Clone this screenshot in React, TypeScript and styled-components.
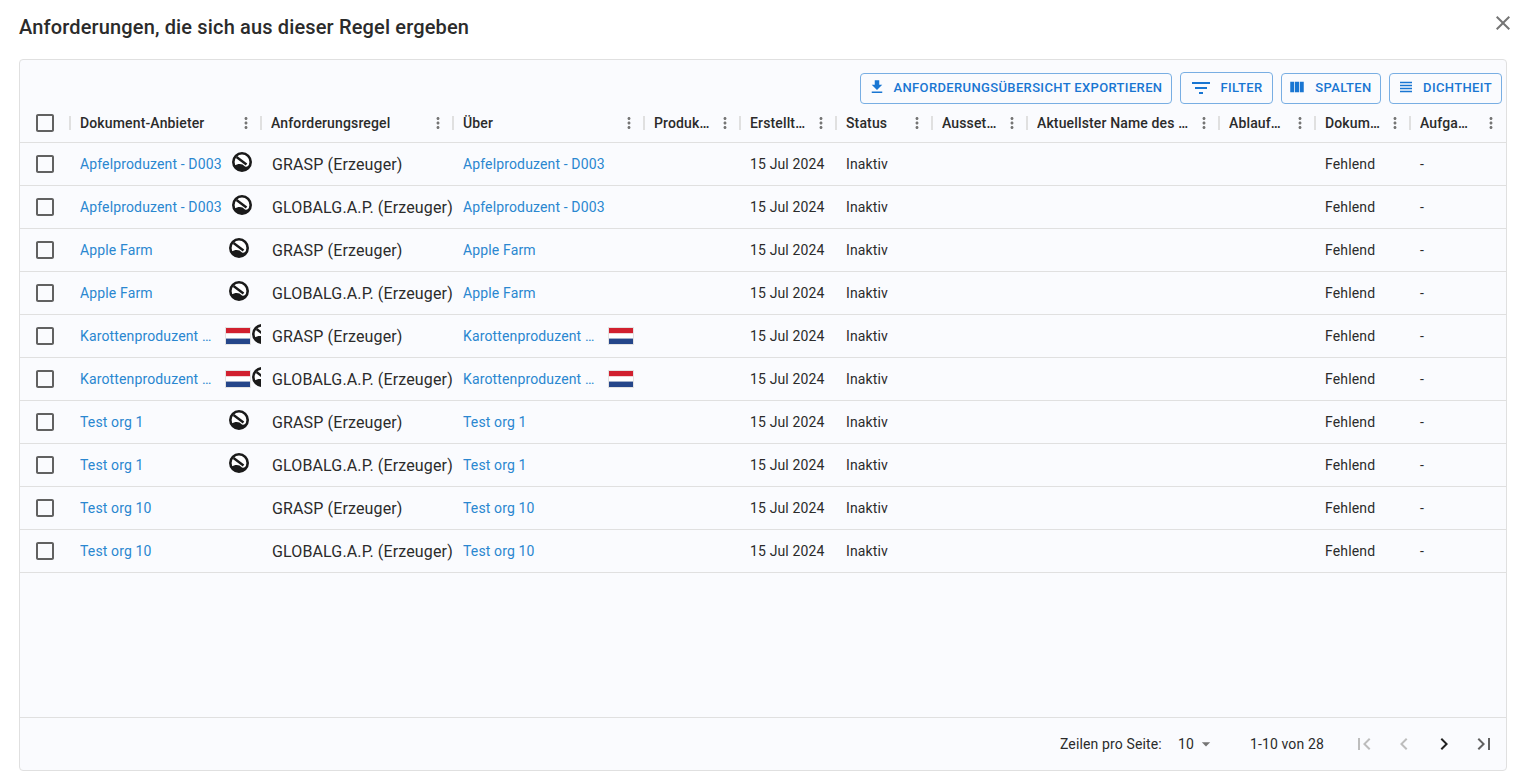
import React from "react";
import styled, { createGlobalStyle } from "styled-components";

const GRID = "50px 191px 192px 191px 96px 96px 96px 95px 192px 96px 95px 96px";

const Global = createGlobalStyle`
  html, body { margin: 0; padding: 0; background: #fff; }
  body { font-family: Roboto, "Liberation Sans", sans-serif; color: #2b2b2b; overflow: hidden; }
`;
const Page = styled.div`
  width: 1524px; height: 780px; box-sizing: border-box;
  padding: 0 17px 9px 19px; display: flex; flex-direction: column;
`;
const TitleBar = styled.header`
  height: 59px; flex: none; display: flex; align-items: flex-start; justify-content: space-between;
`;
const Title = styled.h2`
  margin: 15px 0 0; font-size: 20px; line-height: 24px; font-weight: 500; letter-spacing: 0.15px; color: #2b2b2b;
`;
const CloseBtn = styled.button`
  border: 0; background: none; padding: 0; margin: 11px -8px 0 0; width: 24px; height: 24px; color: #757575;
  display: flex; align-items: center; justify-content: center;
`;
const Panel = styled.section`
  flex: 1; min-height: 0; display: flex; flex-direction: column; background: #fafbfe;
  border: 1px solid #e0e0e0; border-radius: 4px; overflow: hidden;
`;
const Toolbar = styled.div`
  height: 44px; flex: none; box-sizing: border-box; padding: 12px 4px 0 0;
  display: flex; justify-content: flex-end; align-items: flex-start; gap: 8px;
`;
const ToolButton = styled.button<{ $w: number; $gap: number; $tall?: boolean }>`
  width: ${(p) => p.$w}px; height: ${(p) => (p.$tall ? 32 : 31)}px; margin-top: ${(p) => (p.$tall ? 0 : 1)}px;
  box-sizing: border-box; display: flex; align-items: center; justify-content: center; gap: ${(p) => p.$gap}px;
  background: transparent; border: 1px solid #78aee3; border-radius: 4px; color: #1976d2;
  padding: 0 2px ${(p) => (p.$tall ? 1 : 3)}px 0;
  font-family: inherit; font-size: 13px; font-weight: 500; letter-spacing: 0.36px; text-transform: uppercase; white-space: nowrap;
`;
const Row = styled.div<{ $head?: boolean }>`
  display: grid; grid-template-columns: ${GRID}; flex: none; box-sizing: border-box;
  height: ${(p) => (p.$head ? 39 : 43)}px; border-bottom: 1px solid #e0e0e0; align-items: stretch;
`;
const CheckCell = styled.div`
  display: flex; align-items: center; padding-left: 13px; color: #616161;
`;
const HeadCell = styled.div`
  display: flex; align-items: center; min-width: 0; padding-right: 6px;
`;
const Sep = styled.span`
  flex: none; width: 2px; height: 14px; background: #e0e0e0; margin-left: -1px; margin-right: 9px;
`;
const HeadLabel = styled.span<{ $gap: number }>`
  flex: 1; min-width: 0; overflow: hidden; white-space: nowrap; text-overflow: ellipsis; margin-right: ${(p) => p.$gap}px;
  font-size: 14px; font-weight: 500; letter-spacing: 0.14px; color: #2b2b2b;
`;
const Kebab = styled.span`
  flex: none; width: 18px; height: 18px; color: #757575; display: flex;
`;
const Cell = styled.div<{ $large?: boolean }>`
  display: flex; align-items: center; min-width: 0; overflow: hidden; padding-left: ${(p) => (p.$large ? 11 : 10)}px; white-space: nowrap;
  font-size: ${(p) => (p.$large ? 16 : 14)}px; letter-spacing: 0.14px; color: #2b2b2b;
`;
const NameLink = styled.a<{ $w: number }>`
  flex: none; width: ${(p) => p.$w}px; overflow: hidden; text-overflow: ellipsis; color: #2a87d0; text-decoration: none;
  box-sizing: border-box; padding-right: 4px;
`;
const BadgeIcon = styled.svg<{ $gap: number }>`
  flex: none; width: 20px; height: 20px; margin-left: ${(p) => p.$gap}px; margin-bottom: 4px;
`;
const Flag = styled.svg`
  flex: none; width: 26px; height: 18px;
`;
const Spacer = styled.div`flex: 1;`;
const Footer = styled.footer`
  height: 52px; flex: none; border-top: 1px solid #e0e0e0; display: flex; align-items: center; justify-content: flex-end;
  font-size: 14px; letter-spacing: 0.14px; color: #2b2b2b; padding-right: 2px;
`;
const PageSize = styled.div`
  display: flex; align-items: center; margin-left: 16px; width: 72px; gap: 2px;
`;
const Caret = styled.span`
  display: flex; color: #757575;
`;
const Range = styled.span`
  margin-right: 20px;
`;
const PageBtn = styled.button<{ $off?: boolean }>`
  width: 40px; height: 40px; padding: 0; border: 0; background: none; display: flex; align-items: center; justify-content: center;
  color: ${(p) => (p.$off ? "#bdbdbd" : "#212121")};
`;
const PageBtnEnd = styled(PageBtn)`color: #616161;`;

const I = ({ d, s = 24 }: { d: string; s?: number }) => (
  <svg width={s} height={s} viewBox="0 0 24 24" fill="currentColor"><path d={d} /></svg>
);
const P = {
  close: "M19 6.41 17.59 5 12 10.59 6.41 5 5 6.41 10.59 12 5 17.59 6.41 19 12 13.41 17.59 19 19 17.59 13.41 12z",
  down: "M5 20h14v-2H5v2zM19 9h-4V3H9v6H5l7 7 7-7z",
  filter: "M10 18h4v-2h-4v2zM3 6v2h18V6H3zm3 7h12v-2H6v2z",
  cols: "M14.67 5v14H9.33V5zm1 14H21V5h-5.33zm-7.34 0V5H3v14z",
  dens: "M4 15h16v-2H4v2zm0 4h16v-2H4v2zm0-8h16V9H4v2zm0-6v2h16V5H4z",
  box: "M19 5v14H5V5h14m0-2H5c-1.1 0-2 .9-2 2v14c0 1.1.9 2 2 2h14c1.1 0 2-.9 2-2V5c0-1.1-.9-2-2-2z",
  more: "M12 8c1.1 0 2-.9 2-2s-.9-2-2-2-2 .9-2 2 .9 2 2 2zm0 2c-1.1 0-2 .9-2 2s.9 2 2 2 2-.9 2-2-.9-2-2-2zm0 6c-1.1 0-2 .9-2 2s.9 2 2 2 2-.9 2-2-.9-2-2-2z",
  first: "M18.41 16.59 13.82 12l4.59-4.59L17 6l-6 6 6 6zM6 6h2v12H6z",
  prev: "M15.41 16.59 10.83 12l4.58-4.59L14 6l-6 6 6 6z",
  next: "M8.59 16.59 13.17 12 8.59 7.41 10 6l6 6-6 6z",
  last: "M5.59 7.41 10.18 12l-4.59 4.59L7 18l6-6-6-6zM16 6h2v12h-2z",
  caret: "m7 10 5 5 5-5z",
};

const Badge = ({ gap }: { gap: number }) => (
  <BadgeIcon $gap={gap} viewBox="0 0 20 20">
    <circle cx="10" cy="10" r="8.7" fill="#fff" stroke="#1a1a1a" strokeWidth="2.6" />
    <path d="M2.5 13.5 C5 12 8 11.5 10.5 12.5 L13 14.5 C14.5 15 16 14.6 17.5 13 L16 17.5 L6 18.5 Z" fill="#1a1a1a" />
    <path d="M4.5 5 L14.5 12.5" stroke="#1a1a1a" strokeWidth="2.4" fill="none" />
  </BadgeIcon>
);
const NL = () => (
  <Flag viewBox="0 0 26 18">
    <rect width="26" height="18" fill="#e3e3e3" />
    <rect x="1" y="1" width="24" height="5.4" fill="#d1202f" />
    <rect x="1" y="6.4" width="24" height="5.2" fill="#fff" />
    <rect x="1" y="11.6" width="24" height="5.4" fill="#25468a" />
  </Flag>
);

const heads = [
  { t: "Dokument-Anbieter", g: 4 },
  { t: "Anforderungsregel", g: 4 },
  { t: "Über", g: 4 },
  { t: "Produktname", g: 4 },
  { t: "Erstellt am", g: 4 },
  { t: "Status", g: 4 },
  { t: "Aussetzung", g: 4 },
  { t: "Aktuellster Name des Dokuments", g: 4 },
  { t: "Ablaufdatum", g: 4 },
  { t: "Dokumentstatus", g: 4 },
  { t: "Aufgabenstatus", g: 8 },
];

type R = { name: string; rule: string; w: number; gap?: number; flag?: boolean };
const nameRows = [
  { name: "Apfelproduzent - D003", w: 148, gap: 4 },
  { name: "Apple Farm", w: 145, gap: 4 },
  { name: "Karottenproduzent NL - D004", w: 145, flag: true, gap: 1 },
  { name: "Test org 1", w: 145, gap: 4 },
  { name: "Test org 10", w: 145 },
];
const rows: R[] = nameRows.flatMap((n) => [
  { ...n, rule: "GRASP (Erzeuger)" },
  { ...n, rule: "GLOBALG.A.P. (Erzeuger)" },
]);

export default function App() {
  return (
    <Page>
      <Global />
      <TitleBar>
        <Title>Anforderungen, die sich aus dieser Regel ergeben</Title>
        <CloseBtn aria-label="Schließen"><I d={P.close} /></CloseBtn>
      </TitleBar>
      <Panel>
        <Toolbar>
          <ToolButton $w={312} $gap={8}><I d={P.down} s={18} />Anforderungsübersicht exportieren</ToolButton>
          <ToolButton $w={93} $gap={8} $tall><I d={P.filter} s={24} />Filter</ToolButton>
          <ToolButton $w={100} $gap={9}><I d={P.cols} s={18} />Spalten</ToolButton>
          <ToolButton $w={113} $gap={8}><I d={P.dens} s={18} />Dichtheit</ToolButton>
        </Toolbar>
        <Row $head>
          <CheckCell><I d={P.box} /></CheckCell>
          {heads.map((h) => (
            <HeadCell key={h.t}>
              <Sep />
              <HeadLabel $gap={h.g}>{h.t}</HeadLabel>
              <Kebab><I d={P.more} s={18} /></Kebab>
            </HeadCell>
          ))}
        </Row>
        {rows.map((r, i) => (
          <Row key={i}>
            <CheckCell><I d={P.box} /></CheckCell>
            <Cell>
              <NameLink $w={r.w}>{r.name}</NameLink>
              {r.flag && <NL />}
              {r.gap !== undefined && <Badge gap={r.gap} />}
            </Cell>
            <Cell $large>{r.rule}</Cell>
            <Cell>
              <NameLink $w={r.w}>{r.name}</NameLink>
              {r.flag && <NL />}
            </Cell>
            <Cell />
            <Cell>15 Jul 2024</Cell>
            <Cell>Inaktiv</Cell>
            <Cell />
            <Cell />
            <Cell />
            <Cell>Fehlend</Cell>
            <Cell>-</Cell>
          </Row>
        ))}
        <Spacer />
        <Footer>
          <span>Zeilen pro Seite:</span>
          <PageSize><span>10</span><Caret><I d={P.caret} s={20} /></Caret></PageSize>
          <Range>1-10 von 28</Range>
          <PageBtn $off><I d={P.first} /></PageBtn>
          <PageBtn $off><I d={P.prev} /></PageBtn>
          <PageBtn><I d={P.next} /></PageBtn>
          <PageBtnEnd><I d={P.last} /></PageBtnEnd>
        </Footer>
      </Panel>
    </Page>
  );
}
